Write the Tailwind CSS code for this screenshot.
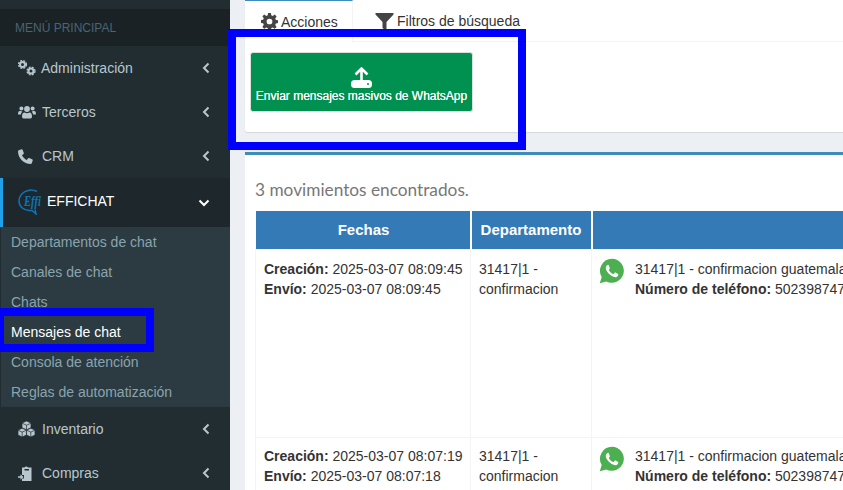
<!DOCTYPE html>
<html lang="en">
<head>
  <meta charset="UTF-8" />
  <title>Mensajes de chat</title>
  <script src="https://cdn.jsdelivr.net/npm/@tailwindcss/browser@4"></script>
</head>
<body class="relative w-[843px] h-[490px] overflow-hidden bg-[#ecf0f5] font-['Liberation_Sans',Arial,sans-serif] text-[14px] leading-[20px] text-[#333] flex">

  <!-- sidebar -->
  <aside class="w-[230px] h-[490px] shrink-0 bg-[#222d32] pt-[9px] overflow-hidden">
    <div class="h-[37px] pl-[15px] flex items-center bg-[#1a2226] text-[12px] text-[#4b646f]">MENÚ PRINCIPAL</div>

    <a class="h-[44px] pl-[18px] pr-[20px] flex items-center text-[#b8c7ce]">
      <svg class="w-[18px] h-[16px] mr-[5px]" viewBox="0 0 18 16" fill="none" stroke="#b8c7ce">
        <circle cx="4.5" cy="4.5" r="2.5" stroke-width="2"/>
        <circle cx="4.5" cy="4.5" r="4" stroke-width="1.2" stroke-dasharray="2 1.2"/>
        <circle cx="13" cy="11" r="2.5" stroke-width="2"/>
        <circle cx="13" cy="11" r="4" stroke-width="1.2" stroke-dasharray="2 1.2"/>
      </svg>
      <span>Administración</span>
      <svg class="ml-auto w-[8px] h-[12px]" viewBox="0 0 8 12" fill="none" stroke="#b8c7ce" stroke-width="2"><path d="M6.5 1.5 2 6l4.500 4.500"/></svg>
    </a>
    <a class="h-[44px] pl-[18px] pr-[20px] flex items-center text-[#b8c7ce]">
      <svg class="w-[18px] h-[14px] mr-[6px]" viewBox="0 0 18 14" fill="#b8c7ce"><circle cx="3.4" cy="3.4" r="2"/><circle cx="14.6" cy="3.4" r="2"/><circle cx="9" cy="4" r="2.9"/><path d="M0 9c0-2.500 1-3 2.400-3 .8 0 1.400.3 2 .8C3.400 7.500 3 8.300 3 9.500H1C.4 9.500 0 9.500 0 9zM18 9c0-2.500-1-3-2.400-3-.8 0-1.400.3-2 .8.9.7 1.400 1.500 1.400 2.700h2c.6 0 1-.1 1-.5zM4 11.500C4 9 5 7.500 6.500 7.500c.8.500 1.500.7 2.500.7s1.700-.2 2.500-.7C13 7.500 14 9 14 11.500c0 1.500-1 2-2 2H6c-1 0-2-.5-2-2z"/></svg>
      <span>Terceros</span>
      <svg class="ml-auto w-[8px] h-[12px]" viewBox="0 0 8 12" fill="none" stroke="#b8c7ce" stroke-width="2"><path d="M6.500 1.500 2 6l4.500 4.500"/></svg>
    </a>
    <a class="h-[44px] pl-[18px] pr-[20px] flex items-center text-[#b8c7ce]">
      <svg class="w-[15px] h-[15px] mr-[9px]" viewBox="0 0 15 15" fill="#b8c7ce"><path d="M3.500.3.800 1.200C.3 1.400 0 1.800 0 2.300 0 9.300 5.700 15 12.700 15c.5 0 .9-.3 1.100-.8l.9-2.700c.2-.5-.1-1-.6-1.200l-3-1.200c-.4-.2-.9 0-1.100.3L8.800 11c-2-.9-3.800-2.700-4.800-4.800l1.500-1.200c.4-.3.5-.7.3-1.100L4.600.8C4.500.4 4 .1 3.500.3z"/></svg>
      <span>CRM</span>
      <svg class="ml-auto w-[8px] h-[12px]" viewBox="0 0 8 12" fill="none" stroke="#b8c7ce" stroke-width="2"><path d="M6.500 1.500 2 6l4.500 4.500"/></svg>
    </a>

    <a class="h-[49px] pl-[15px] pr-[20px] flex items-center text-white bg-[#1e282c] border-l-[3px] border-[#1fa0e8]">
      <svg class="w-[26px] h-[26px] mr-[3px] -mt-[1px] shrink-0" viewBox="0 0 26 26" fill="none" stroke="#0e74b8" stroke-width="1.5">
        <path d="M19 2.500C16.500 1.200 14 .8 11 1.200 5 2.200 1 6.500 1 12c0 5.500 4.500 9.500 10 9.500h3l4 3.500-1-4.500"/>
        <text x="6" y="17" font-family="Liberation Serif" font-style="italic" font-weight="700" font-size="15" fill="#0e74b8" stroke="none" textLength="17" lengthAdjust="spacingAndGlyphs">Effi</text>
      </svg>
      <span class="-mt-[3px]">EFFICHAT</span>
      <svg class="ml-auto w-[12px] h-[8px]" viewBox="0 0 12 8" fill="none" stroke="#fff" stroke-width="2"><path d="M1.500 1.500 6 6l4.500-4.500"/></svg>
    </a>

    <div class="ml-[1px] h-[180px] bg-[#2c3b41] text-[#8aa4af] flex flex-col">
      <a class="h-[30px] pl-[10px] flex items-center">Departamentos de chat</a>
      <a class="h-[30px] pl-[10px] flex items-center">Canales de chat</a>
      <a class="h-[30px] pl-[10px] flex items-center">Chats</a>
      <a class="h-[30px] pl-[10px] flex items-center text-white">Mensajes de chat</a>
      <a class="h-[30px] pl-[10px] flex items-center">Consola de atención</a>
      <a class="h-[30px] pl-[10px] flex items-center">Reglas de automatización</a>
    </div>

    <a class="h-[44px] pl-[18px] pr-[20px] flex items-center text-[#b8c7ce]">
      <svg class="w-[17px] h-[16px] mr-[7px]" viewBox="0 0 17 16" fill="#b8c7ce" stroke="#222d32" stroke-width=".7">
        <path d="M8.500 0 13 2v4.800L8.500 8.800 4 6.800V2z"/><path d="M4 2.200l4.500 2 4.500-2M8.500 4.200v4.500" fill="none"/>
        <path d="M4.200 7.200l4.200 1.900v5L4.200 16 0 14.100v-5z"/><path d="M0 9.200l4.200 1.900 4.200-1.900M4.200 11.100V16" fill="none"/>
        <path d="M12.800 7.200 17 9.100v5L12.800 16l-4.200-1.900v-5z"/><path d="M8.600 9.200l4.200 1.900L17 9.200M12.800 11.100V16" fill="none"/>
      </svg>
      <span>Inventario</span>
      <svg class="ml-auto w-[8px] h-[12px]" viewBox="0 0 8 12" fill="none" stroke="#b8c7ce" stroke-width="2"><path d="M6.500 1.500 2 6l4.500 4.500"/></svg>
    </a>
    <a class="h-[44px] pl-[18px] pr-[20px] flex items-center text-[#b8c7ce]">
      <svg class="w-[15px] h-[15px] mr-[9px]" viewBox="0 0 15 15" fill="#b8c7ce"><path d="M4 1.500h2.500a2 2 0 0 1 3.500 0h3.500V15H4v-2.500h2V9H4z"/><path fill="#222d32" d="M6.500 3h4.500v1.500H6.500z"/><path d="M0 10.200h2.500V8.200l3 2.800-3 2.800v-2H0z"/></svg>
      <span>Compras</span>
      <svg class="ml-auto w-[8px] h-[12px]" viewBox="0 0 8 12" fill="none" stroke="#b8c7ce" stroke-width="2"><path d="M6.500 1.500 2 6l4.500 4.500"/></svg>
    </a>
  </aside>

  <!-- content -->
  <main class="w-[613px] shrink-0 pl-[15px] overflow-hidden">
    <section class="w-[620px] h-[132px] bg-white rounded-b-[3px] shadow-[0_1px_1px_rgba(0,0,0,0.1)] overflow-hidden">
      <div class="h-[42px] flex border-b border-[#f4f4f4]">
        <div class="w-[108px] h-[42px] flex items-center pl-[16px] bg-white border-t-[1px] border-r border-t-[#3c8dbc] border-r-[#f4f4f4]">
          <svg class="w-[17px] h-[17px] mr-[3px]" viewBox="0 0 16 16" fill="#444"><path fill-rule="evenodd" d="M6.700 0h2.600l.4 2.200 1.300.6 1.900-1.300 1.800 1.800-1.300 1.900.6 1.300 2 .4v2.600l-2 .4-.6 1.300 1.300 1.900-1.800 1.800-1.900-1.300-1.300.6-.4 2H6.700l-.4-2-1.300-.6-1.900 1.300-1.800-1.800L2.600 11l-.6-1.300-2-.4V6.700l2-.4.6-1.300-1.300-1.900 1.800-1.800L5 2.800l1.300-.6zM8 5.300a2.700 2.700 0 1 0 0 5.400 2.700 2.700 0 0 0 0-5.400z"/></svg>
          <span>Acciones</span>
        </div>
        <div class="flex items-center pl-[22px]">
          <svg class="w-[19px] h-[18px] mr-[3px] mt-[2px]" viewBox="0 0 18 18" fill="#444"><path d="M0 0h18v1.500L11 9v9l-4-3V9L0 1.500z"/></svg>
          <span>Filtros de búsqueda</span>
        </div>
      </div>
      <div class="pt-[10px] pl-[5px]">
        <button class="w-[223px] h-[60px] pt-[7px] flex flex-col items-center justify-center bg-[#00904f] border border-[#d8e2dc] rounded-[3px] text-white text-[12px] leading-[16px]">
          <svg class="w-[21px] h-[21px]" viewBox="0 0 21 21">
            <rect x="0" y="13" width="21" height="8" rx="3.500" fill="#fff"/>
            <circle cx="17" cy="17" r="1" fill="#00904f"/>
            <path d="M4.500 7.500 10.500 1.500l6 6M10.500 2v14" fill="none" stroke="#fff" stroke-width="2.600"/>
          </svg>
          <span class="[text-shadow:0_0_0.3px_#fff]">Enviar mensajes masivos de WhatsApp</span>
        </button>
      </div>
    </section>

    <section class="w-[620px] mt-[20px] h-[400px] bg-white border-t-[3px] border-[#3c8dbc] px-[10px]">
      <p class="pt-[24px] h-[56px] font-['Lato',sans-serif] text-[17.25px] leading-[22px] text-[#777]">3 movimientos encontrados.</p>
      <table class="w-[600px] table-fixed border-collapse">
        <colgroup><col class="w-[215px]"><col class="w-[121px]"><col></colgroup>
        <thead class="bg-[#337ab7] text-white font-bold text-[15px]">
          <tr class="h-[38px]">
            <th class="pl-[2px] border-r-2 border-white text-center">Fechas</th>
            <th class="border-r-2 border-white text-center">Departamento</th>
            <th></th>
          </tr>
        </thead>
        <tbody>
          <tr class="h-[188px] align-top border-t border-b border-[#f4f4f4]">
            <td class="p-[8px] pt-[9px] whitespace-nowrap border-x border-[#f4f4f4]"><b>Creación:</b> 2025-03-07 08:09:45<br><b>Envío:</b> 2025-03-07 08:09:45</td>
            <td class="p-[8px] pt-[9px] border-r border-[#f4f4f4]">31417|1 - confirmacion</td>
            <td class="p-[8px] border-r border-[#f4f4f4]">
              <div class="flex whitespace-nowrap">
                <svg class="w-[26px] h-[26px] -ml-[1px] mr-[10px] shrink-0" viewBox="0 0 26 26"><path fill="#4caf50" d="M13 .8a12 12 0 0 0-10.300 18.200L.8 25.200l6.400-1.800A12 12 0 1 0 13 .8z"/><path fill="#fff" d="M9.300 6.800c-.5 0-1.300.3-1.800 1-1.200 1.500-.9 3.700.7 6 1.700 2.500 4.300 4.700 7.200 5.300 1.700.3 3.200-.4 3.700-1.700.2-.6.200-1.300.1-1.500-.2-.3-2.300-1.400-2.800-1.500-.4-.1-.6.100-.9.500-.3.400-.7 1-1 1-.4.100-1.700-.5-2.800-1.500-1-.9-1.700-1.900-1.900-2.400 0-.4.500-.7.900-1.200.2-.3.200-.5.100-.9-.2-.4-.9-2.300-1.200-2.800-.1-.2-.3-.3-.3-.3z"/></svg>
                <div class="pt-[1px]">31417|1 - confirmacion guatemala<br><b>Número de teléfono:</b> 502398747</div>
              </div>
            </td>
          </tr>
          <tr class="align-top">
            <td class="p-[8px] whitespace-nowrap border-x border-[#f4f4f4]"><b>Creación:</b> 2025-03-07 08:07:19<br><b>Envío:</b> 2025-03-07 08:07:18</td>
            <td class="p-[8px] border-r border-[#f4f4f4]">31417|1 - confirmacion</td>
            <td class="p-[8px] border-r border-[#f4f4f4]">
              <div class="flex whitespace-nowrap">
                <svg class="w-[26px] h-[26px] -ml-[1px] mr-[10px] shrink-0" viewBox="0 0 26 26"><path fill="#4caf50" d="M13 .8a12 12 0 0 0-10.300 18.200L.8 25.200l6.400-1.800A12 12 0 1 0 13 .8z"/><path fill="#fff" d="M9.300 6.800c-.5 0-1.300.3-1.800 1-1.200 1.500-.9 3.700.7 6 1.700 2.500 4.300 4.700 7.200 5.300 1.700.3 3.200-.4 3.700-1.700.2-.6.200-1.300.1-1.500-.2-.3-2.300-1.400-2.800-1.500-.4-.1-.6.100-.9.500-.3.400-.7 1-1 1-.4.100-1.700-.5-2.800-1.500-1-.9-1.700-1.900-1.900-2.400 0-.4.500-.7.900-1.200.2-.3.200-.5.100-.9-.2-.4-.9-2.300-1.200-2.800-.1-.2-.3-.3-.3-.3z"/></svg>
                <div>31417|1 - confirmacion guatemala<br><b>Número de teléfono:</b> 502398747</div>
              </div>
            </td>
          </tr>
        </tbody>
      </table>
    </section>
  </main>

  <!-- annotation rectangles -->
  <div class="absolute left-[228px] top-[29px] w-[298px] h-[121px] border-[8px] border-[#0000ff] pointer-events-none"></div>
  <div class="absolute left-0 top-[308px] w-[154px] h-[44px] border-[8px] border-l-[4px] border-[#0000ff] pointer-events-none"></div>
</body>
</html>
